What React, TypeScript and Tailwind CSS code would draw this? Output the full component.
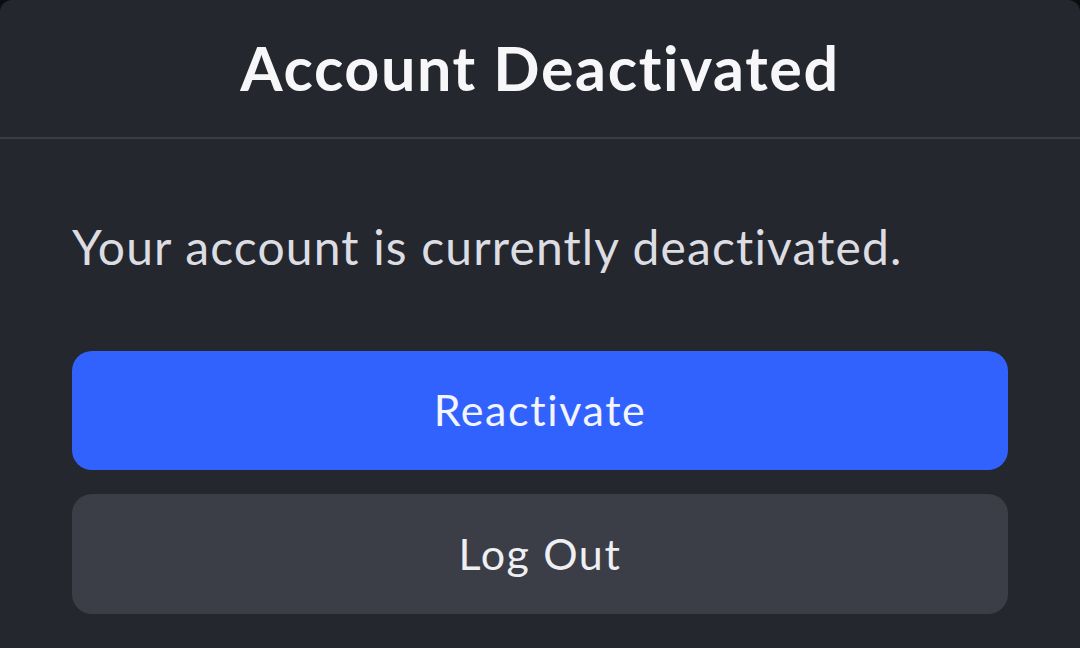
import React from "react";

export default function App() {
  return (
    <div className="w-[1080px] h-[648px] bg-[#0c0d10] overflow-hidden [font-variant-ligatures:none]" style={{ fontFamily: "Lato, 'Noto Sans', sans-serif" }}>
      <div className="w-full h-full bg-[#25272e] rounded-t-[12px] flex flex-col">
        <div className="h-[139px] flex items-center justify-center border-b-2 border-[#3b3d45] pb-[2px]">
          <h1 className="text-[61px] font-bold tracking-[1.6px] text-[#f7f7f9] leading-none">Account Deactivated</h1>
        </div>
        <div className="px-[72px] flex flex-col">
          <p className="mt-[84px] text-[48px] tracking-[1.15px] text-[#dcdde2] leading-none">Your account is currently deactivated.</p>
          <button className="mt-[80px] h-[119px] w-full rounded-[20px] bg-[#3262fe] text-[43px] tracking-[1.6px] text-[#f2f5ff] flex items-center justify-center">Reactivate</button>
          <button className="mt-[24px] h-[120px] w-full rounded-[20px] bg-[#3b3d47] text-[43px] tracking-[1.6px] text-[#eeeff2] flex items-center justify-center">Log Out</button>
        </div>
      </div>
    </div>
  );
}
